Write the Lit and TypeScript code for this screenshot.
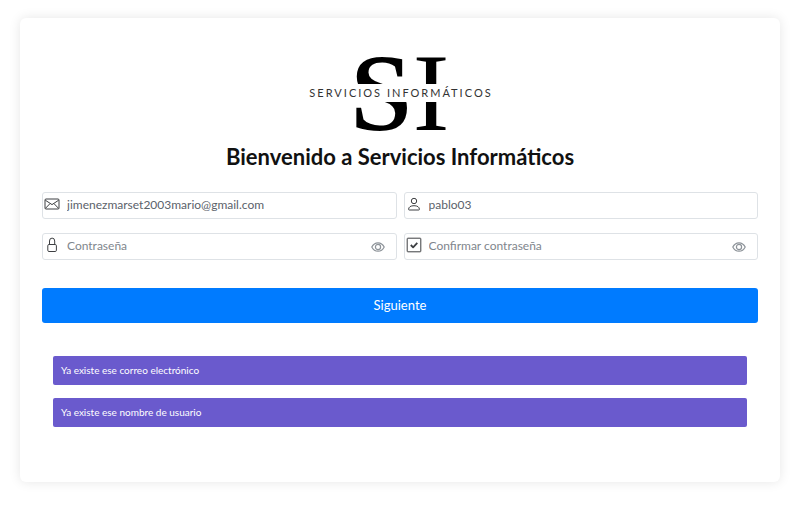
import { LitElement, css, html, svg } from "lit";
import { customElement, property, state } from "lit/decorators.js";

const icons = {
  mail: svg`<rect x="1" y="3" width="14" height="10" rx="1"/><path d="M1.3 4.2 8 8.6l6.7-4.4M1.4 12.4 6.1 7.5M14.6 12.4 9.9 7.5"/>`,
  user: svg`<circle cx="8" cy="5" r="2.7"/><path d="M2.6 13.4c0-2.4 2-3.7 5.4-3.7s5.4 1.3 5.4 3.7c0 .4-.2.6-.6.6H3.2c-.4 0-.6-.2-.6-.6Z"/>`,
  lock: svg`<rect x="3.8" y="7.5" width="8.6" height="7" rx="1.2"/><path d="M5.5 7.5V4a2.6 2.9 0 0 1 5.2 0v3.5"/>`,
  check: svg`<rect x="1.2" y="1.2" width="13.6" height="13.6" rx=".6"/><path stroke-width="1.8" d="m4.8 8 2.3 2.3 4.2-4.4"/>`,
};

type IconName = keyof typeof icons;

@customElement("form-field")
export class FormField extends LitElement {
  @property() label = "";
  @property() type = "text";
  @property() value = "";
  @property() icon: IconName = "mail";
  @state() private revealed = false;

  static styles = css`
    :host {
      display: block;
      min-width: 0;
    }
    .field {
      display: flex;
      align-items: center;
      height: 27px;
      box-sizing: border-box;
      border: 1px solid #dee2e6;
      border-radius: 3px;
      background: #fff;
    }
    .icon {
      display: flex;
      flex: none;
      padding: 0 7px 4px 1px;
    }
    .icon svg {
      width: 16px;
      height: 16px;
      fill: none;
      stroke: #3d3f42;
      stroke-width: 1;
      stroke-linejoin: round;
    }
    .input {
      flex: 1;
      min-width: 0;
      height: 100%;
      padding: 0 0 2px;
      box-sizing: border-box;
      border: 0;
      outline: 0;
      background: none;
      color: #5b626a;
      font: 12px/16px Lato, sans-serif;
    }
    .input::placeholder {
      color: #7f868d;
      opacity: 1;
    }
    .eye {
      display: flex;
      padding: 0;
      margin-right: 11px;
      border: 0;
      background: none;
      cursor: pointer;
    }
    .eye svg {
      width: 14px;
      height: 14px;
      fill: none;
      stroke: #8d9399;
      stroke-width: 1.2;
    }
  `;

  render() {
    const secret = this.type === "password";
    return html`
      <div class="field">
        <label class="icon" for="input" aria-label=${this.label}>
          <svg viewBox="0 0 16 16" aria-hidden="true">${icons[this.icon]}</svg>
        </label>
        <input
          id="input"
          class="input"
          type=${secret && !this.revealed ? "password" : "text"}
          placeholder=${this.label}
          .value=${this.value}
        />
        ${secret
          ? html`<button
              class="eye"
              type="button"
              aria-label="Mostrar contraseña"
              @click=${() => (this.revealed = !this.revealed)}
            >
              <svg viewBox="0 0 14 14" aria-hidden="true">
                <path d="M.8 7C2.2 4.2 4.3 2.8 7 2.8S11.8 4.2 13.2 7C11.8 9.8 9.7 11.2 7 11.2S2.2 9.8.8 7Z" />
                <circle cx="7" cy="7" r="2.6" />
              </svg>
            </button>`
          : ""}
      </div>
    `;
  }
}

@customElement("app-root")
export class AppRoot extends LitElement {
  static styles = css`
    :host {
      display: block;
      padding: 18px 20px 24px;
      background: #fff;
      font-family: Lato, sans-serif;
    }
    .card {
      display: flex;
      flex-direction: column;
      padding: 36px 22px 55px;
      border-radius: 6px;
      background: #fff;
      box-shadow: 0 0 12px rgba(0, 0, 0, 0.1);
    }
    .logo {
      align-self: center;
      width: 200px;
      height: 80px;
    }
    .monogram {
      font: 110px "Liberation Serif", serif;
      text-anchor: middle;
    }
    .heavy {
      font-weight: 700;
    }
    .brand {
      font: 11px Lato, sans-serif;
      letter-spacing: 2px;
      fill: #333;
    }
    .title {
      margin: 10px 0 22px;
      text-align: center;
      font-size: 22px;
      line-height: 26px;
      font-weight: 700;
      color: #111;
    }
    .fields {
      display: grid;
      grid-template-columns: 1fr 1fr;
      gap: 14px 7px;
    }
    .submit {
      height: 35px;
      margin-top: 28px;
      padding: 0 0 2px;
      border: 0;
      border-radius: 3px;
      background: #007bff;
      color: #fff;
      font: 13px/18px Lato, sans-serif;
      cursor: pointer;
    }
    .alerts {
      display: grid;
      gap: 13px;
      margin: 33px 11px 0;
    }
    .alert {
      padding: 6px 8px 7px;
      border-radius: 2px;
      background: #6a5acd;
      color: #fff;
      font-size: 10px;
      line-height: 16px;
    }
  `;

  private errors = ["Ya existe ese correo electrónico", "Ya existe ese nombre de usuario"];

  render() {
    return html`
      <form class="card" @submit=${(e: Event) => e.preventDefault()}>
        <svg class="logo" viewBox="0 0 200 80" role="img" aria-label="Servicios Informáticos">
          <text class="monogram heavy" x="81" y="76">S</text>
          <text class="monogram" x="131" y="76">I</text>
          <rect y="30" width="200" height="18" fill="#fff" />
          <text class="brand" x="101" y="43" text-anchor="middle">SERVICIOS INFORMÁTICOS</text>
        </svg>
        <h1 class="title">Bienvenido a Servicios Informáticos</h1>
        <div class="fields">
          <form-field icon="mail" label="Correo electrónico" value="jimenezmarset2003mario@gmail.com"></form-field>
          <form-field icon="user" label="Nombre de usuario" value="pablo03"></form-field>
          <form-field icon="lock" label="Contraseña" type="password"></form-field>
          <form-field icon="check" label="Confirmar contraseña" type="password"></form-field>
        </div>
        <button class="submit" type="submit">Siguiente</button>
        <div class="alerts" role="alert">
          ${this.errors.map((text) => html`<div class="alert">${text}</div>`)}
        </div>
      </form>
    `;
  }
}
